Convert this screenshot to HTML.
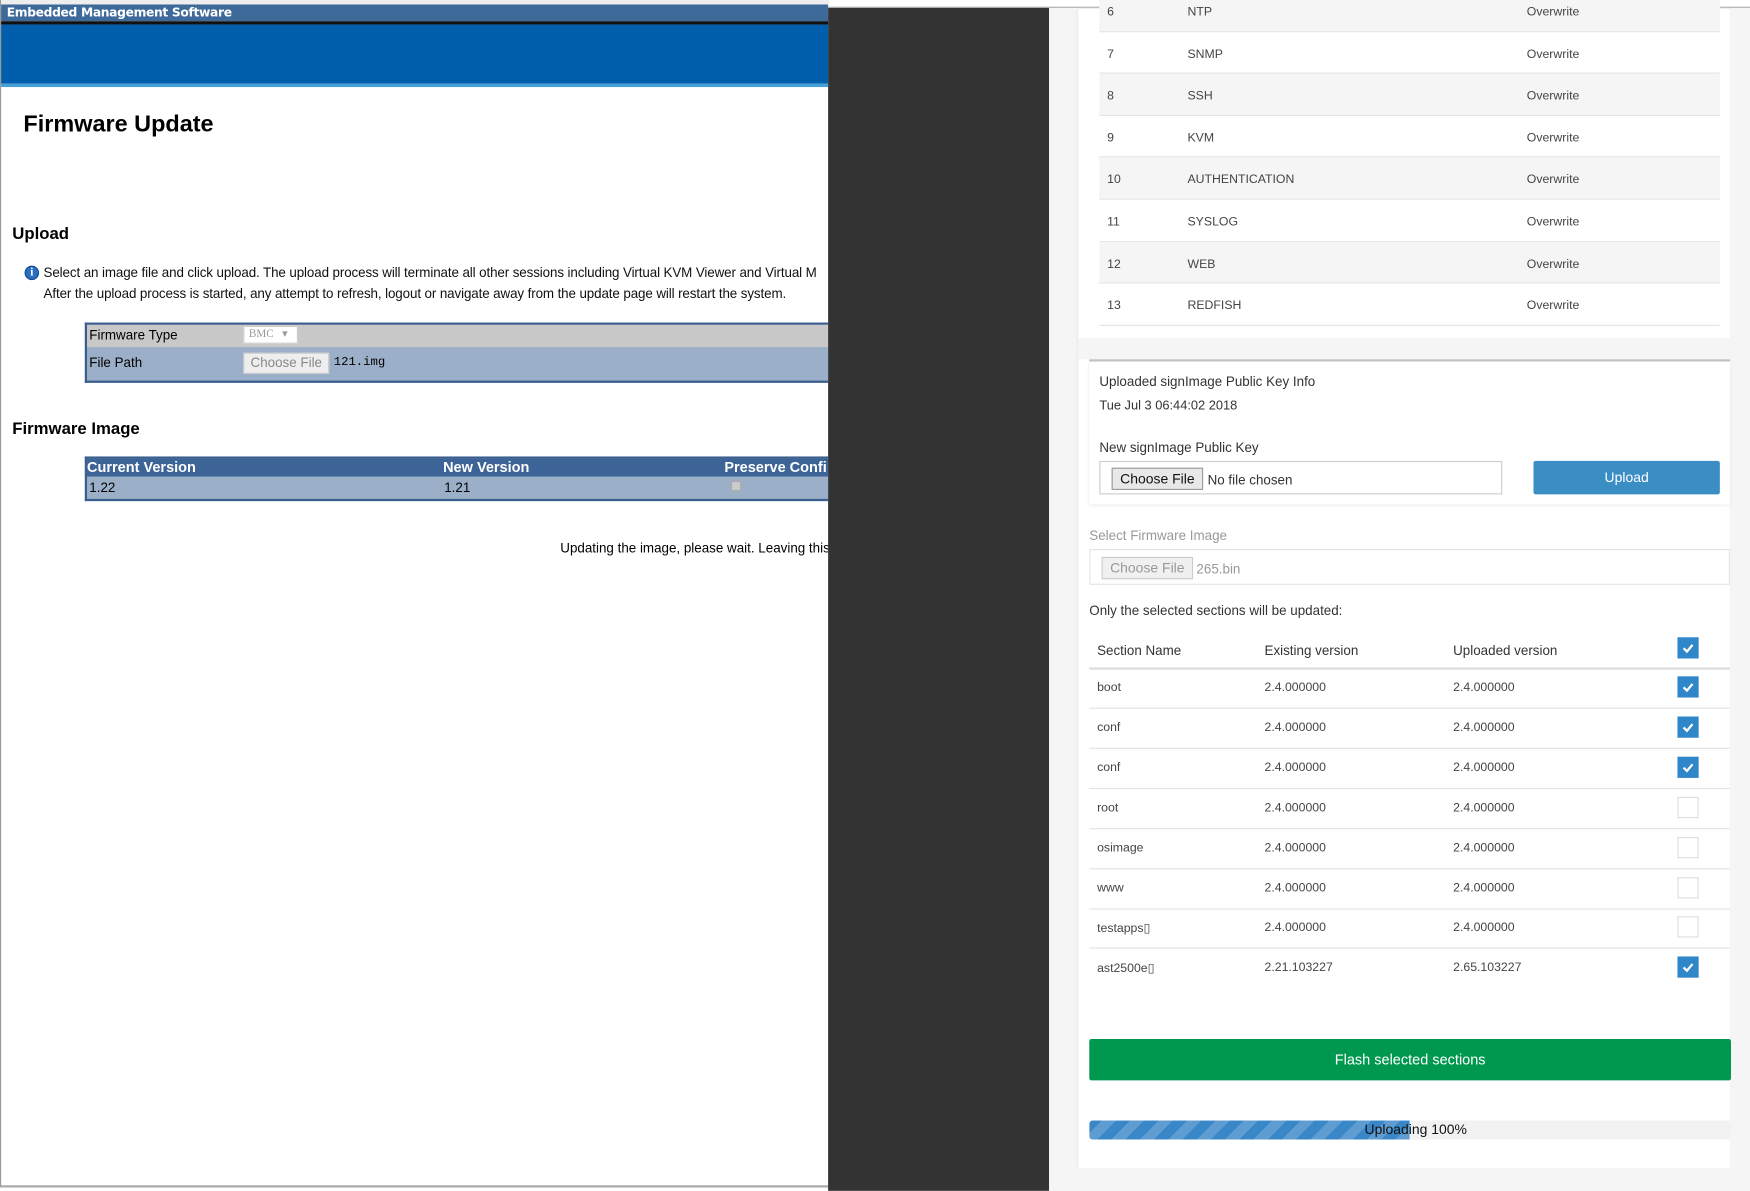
<!DOCTYPE html>
<html><head><meta charset="utf-8"><style>
*{margin:0;padding:0;box-sizing:border-box}
html,body{width:1750px;height:1191px;overflow:hidden;background:#fff}
#w{position:absolute;left:0;top:0;width:1568px;height:1067px;transform:scale(1.11607);transform-origin:0 0;font-family:"Liberation Sans",Arial,sans-serif}
.a{position:absolute;white-space:nowrap}
.r{font-size:11px;color:#444}
.cb{position:absolute;width:19px;height:19px;background:#2f86c9;left:1503px}
.cb svg{position:absolute;left:3px;top:3px}
.ce{position:absolute;width:19px;height:19px;border:1px solid #ddd;background:#fff;left:1503px}
</style></head><body><div id="w">
<!-- left panel -->
<div class="a" style="left:0;top:0;width:742px;height:1064px;background:#fff;border-left:1px solid #999;border-bottom:2px solid #aaa"></div>
<div class="a" style="left:1px;top:0;width:741px;height:4px;background:#eee"></div>
<div class="a" style="left:1px;top:4px;width:741px;height:15px;background:#3e6a9a;color:#fff;font-weight:bold;font-size:11px;line-height:15px;padding-left:5px;font-family:'DejaVu Sans',sans-serif;letter-spacing:-0.3px">Embedded Management Software</div>
<div class="a" style="left:1px;top:19px;width:741px;height:3px;background:#111"></div>
<div class="a" style="left:1px;top:22px;width:741px;height:53px;background:#005ead"></div>
<div class="a" style="left:1px;top:75px;width:741px;height:3px;background:#45a0d8"></div>
<div class="a" style="left:21px;top:100px;font-size:21px;font-weight:bold;color:#000">Firmware Update</div>
<div class="a" style="left:11px;top:201px;font-size:15px;font-weight:bold">Upload</div>
<div class="a" style="left:22px;top:238px;width:13px;height:13px;border-radius:50%;background:#2a6fc0;border:1px solid #124a90;color:#fff;font-size:10px;font-weight:bold;text-align:center;line-height:11px;font-family:'Liberation Serif',serif">i</div>
<div class="a" style="left:39px;top:237px;font-size:12px;color:#111;letter-spacing:-0.1px">Select an image file and click upload. The upload process will terminate all other sessions including Virtual KVM Viewer and Virtual M</div>
<div class="a" style="left:39px;top:256px;font-size:12px;color:#111;letter-spacing:-0.1px">After the upload process is started, any attempt to refresh, logout or navigate away from the update page will restart the system.</div>
<div class="a" style="left:76px;top:289px;width:666px;height:54px;border:2px solid #3a5f8f;border-right:none;background:#9bb0c8"></div>
<div class="a" style="left:78px;top:291px;width:664px;height:20px;background:#c8c8c8"></div>
<div class="a" style="left:80px;top:293px;font-size:12px">Firmware Type</div>
<div class="a" style="left:218px;top:292px;width:49px;height:16px;background:#fff;border:1px solid #ccc;font-size:10px;color:#999;padding-left:4px;line-height:14px;font-family:'Liberation Serif',serif">BMC &nbsp;&nbsp;▾</div>
<div class="a" style="left:80px;top:318px;font-size:12px">File Path</div>
<div class="a" style="left:218px;top:316px;width:77px;height:19px;background:#eee;border:1px solid #ccc;font-size:12px;color:#888;text-align:center;line-height:17px">Choose File</div>
<div class="a" style="left:299px;top:319px;font-size:11px;font-family:'Liberation Mono',monospace">121.img</div>
<div class="a" style="left:11px;top:376px;font-size:15px;font-weight:bold">Firmware Image</div>
<div class="a" style="left:76px;top:409px;width:666px;height:40px;border:2px solid #3a5f8f;border-right:none;background:#9bb0c8"></div>
<div class="a" style="left:78px;top:411px;width:664px;height:16px;background:#3d6496"></div>
<div class="a" style="left:78px;top:411px;font-size:13px;font-weight:bold;color:#fff">Current Version</div>
<div class="a" style="left:397px;top:411px;font-size:13px;font-weight:bold;color:#fff">New Version</div>
<div class="a" style="left:649px;top:411px;font-size:13px;font-weight:bold;color:#fff">Preserve Confi</div>
<div class="a" style="left:80px;top:430px;font-size:12px">1.22</div>
<div class="a" style="left:398px;top:430px;font-size:12px">1.21</div>
<div class="a" style="left:655px;top:431px;width:9px;height:9px;background:#ccc;border:1px solid #aaa"></div>
<div class="a" style="left:502px;top:484px;font-size:12px;width:240px;overflow:hidden">Updating the image, please wait. Leaving this page</div>
<!-- dark -->
<div class="a" style="left:742px;top:0;width:198px;height:1067px;background:#333"></div>
<!-- right -->
<div class="a" style="left:940px;top:0;width:628px;height:1067px;background:#f5f5f5"></div>
<div class="a" style="left:742px;top:0;width:826px;height:7px;background:#fff;border-bottom:1px solid #aaa"></div>
<div class="a" style="left:966px;top:8px;width:584px;height:1039px;background:#fff;box-shadow:0 0 2px #ddd"></div>
<div class="a" style="left:1550px;top:8px;width:18px;height:1059px;background:#f5f5f5"></div>
<div id="t1"></div>
<div class="a" style="left:976px;top:322px;width:574px;height:2px;background:#bbb"></div>
<div class="a" style="left:976px;top:324px;width:574px;height:128px;background:#fff;box-shadow:0 1px 3px #e4e4e4"></div>
<div class="a" style="left:985px;top:335px;font-size:12px;color:#333">Uploaded signImage Public Key Info</div>
<div class="a" style="left:985px;top:358px;font-size:11.5px;color:#333">Tue Jul 3 06:44:02 2018</div>
<div class="a" style="left:985px;top:394px;font-size:12px;color:#333">New signImage Public Key</div>
<div class="a" style="left:985px;top:413px;width:361px;height:30px;border:1px solid #ccc;background:#fff"></div>
<div class="a" style="left:996px;top:419px;width:82px;height:20px;background:#e8e8e8;border:1px solid #999;font-size:12.5px;color:#111;text-align:center;line-height:18px">Choose File</div>
<div class="a" style="left:1082px;top:423px;font-size:12px;color:#333">No file chosen</div>
<div class="a" style="left:1374px;top:413px;width:167px;height:30px;background:#3b8ec4;border-radius:2px;color:#fff;font-size:12.5px;text-align:center;line-height:30px">Upload</div>
<div class="a" style="left:976px;top:473px;font-size:12px;color:#999">Select Firmware Image</div>
<div class="a" style="left:976px;top:492px;width:574px;height:32px;border:1px solid #e4e4e4;background:#fff"></div>
<div class="a" style="left:987px;top:499px;width:82px;height:20px;background:#f0f0f0;border:1px solid #ccc;font-size:12.5px;color:#999;text-align:center;line-height:18px">Choose File</div>
<div class="a" style="left:1072px;top:503px;font-size:12px;color:#999">265.bin</div>
<div class="a" style="left:976px;top:540px;font-size:12px;color:#333">Only the selected sections will be updated:</div>
<div class="a" style="left:983px;top:576px;font-size:12px;color:#333">Section Name</div>
<div class="a" style="left:1133px;top:576px;font-size:12px;color:#333">Existing version</div>
<div class="a" style="left:1302px;top:576px;font-size:12px;color:#333">Uploaded version</div>
<div class="a" style="left:976px;top:598px;width:574px;height:2px;background:#ddd"></div>
<div id="t2"></div>
<div class="a" style="left:976px;top:931px;width:575px;height:37px;background:#00984f;border-radius:2px;color:#fff;font-size:13px;text-align:center;line-height:37px">Flash selected sections</div>
<div class="a" style="left:976px;top:1004px;width:575px;height:17px;background:#f2f2f2;border-radius:3px;overflow:hidden">
<div style="position:absolute;left:0;top:0;width:287px;height:17px;background:#3a87c8;background-image:repeating-linear-gradient(-45deg,rgba(255,255,255,.18) 0 9px,transparent 9px 18px)"></div>
<div style="position:absolute;left:0;top:0;width:575px;text-align:center;font-size:12.5px;line-height:17px;color:#111;padding-left:10px">Uploading 100%</div></div>
<script>
var s='',r=[[6,'NTP'],[7,'SNMP'],[8,'SSH'],[9,'KVM'],[10,'AUTHENTICATION'],[11,'SYSLOG'],[12,'WEB'],[13,'REDFISH']];
r.forEach(function(x,i){var c=11+i*37.6;var top=c-20;
s+='<div class="a" style="left:985px;top:'+top+'px;width:556px;height:37.6px;background:'+(i%2==0?'#f5f5f5':'#fff')+';border-bottom:1px solid #e4e4e4"></div>';
s+='<div class="a r" style="left:992px;top:'+(c-6)+'px">'+x[0]+'</div><div class="a r" style="left:1064px;top:'+(c-6)+'px">'+x[1]+'</div><div class="a r" style="left:1368px;top:'+(c-6)+'px">Overwrite</div>';});
s+='<div class="a" style="left:966px;top:303px;width:584px;height:19px;background:#f5f5f5"></div>';
document.getElementById('t1').outerHTML=s;
var ck='<svg width="13" height="13" viewBox="0 0 13 13"><path d="M2.5 6.8l3 3 5-6" stroke="#fff" stroke-width="2" fill="none"/></svg>';
var d=[['boot','2.4.000000','2.4.000000',1],['conf','2.4.000000','2.4.000000',1],['conf','2.4.000000','2.4.000000',1],['root','2.4.000000','2.4.000000',0],['osimage','2.4.000000','2.4.000000',0],['www','2.4.000000','2.4.000000',0],['testapps\u25AF','2.4.000000','2.4.000000',0],['ast2500e\u25AF','2.21.103227','2.65.103227',1]];
s='<div class="cb" style="top:571px">'+ck+'</div>';
d.forEach(function(x,i){var c=616+i*35.9;
if(i<7)s+='<div class="a" style="left:976px;top:'+(c+18)+'px;width:574px;height:1px;background:#e2e2e2"></div>';
s+='<div class="a r" style="left:983px;top:'+(c-6)+'px">'+x[0]+'</div><div class="a r" style="left:1133px;top:'+(c-6)+'px">'+x[1]+'</div><div class="a r" style="left:1302px;top:'+(c-6)+'px">'+x[2]+'</div>';
s+=x[3]?'<div class="cb" style="top:'+(c-10)+'px">'+ck+'</div>':'<div class="ce" style="top:'+(c-10)+'px"></div>';});
document.getElementById('t2').outerHTML=s;
</script>
</div></body></html>
